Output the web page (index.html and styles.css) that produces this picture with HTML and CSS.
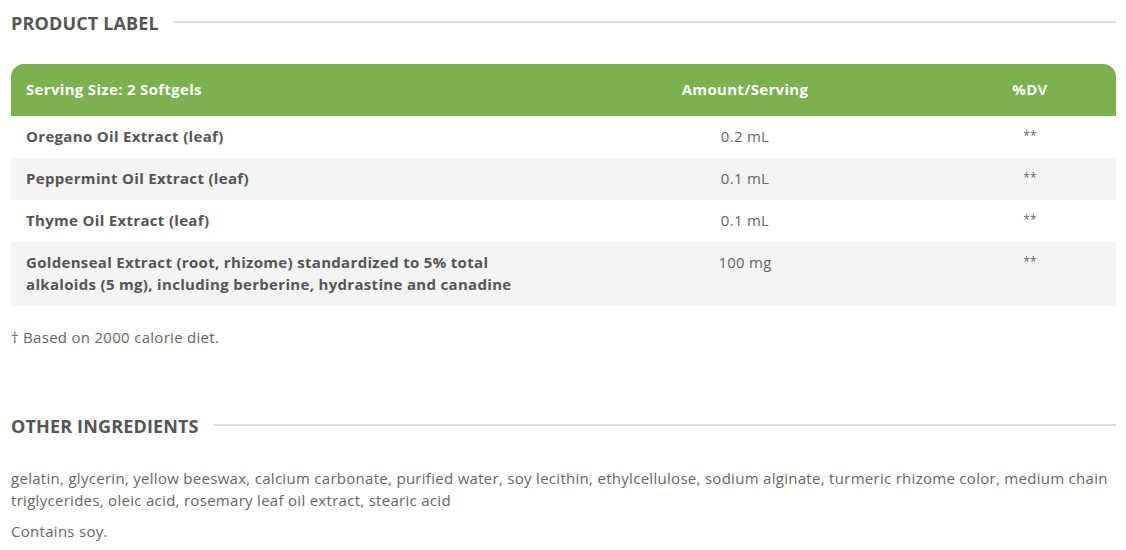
FILE: index.html
```html
<!DOCTYPE html>
<html>
<head>
<meta charset="utf-8">
<link rel="stylesheet" href="styles.css">
</head>
<body>
<div class="page">
  <section class="section">
    <div class="section-title"><h2>PRODUCT LABEL</h2><span class="rule"></span></div>
    <div class="label-table">
      <div class="row head">
        <div class="c-name">Serving Size: 2 Softgels</div>
        <div class="c-amt">Amount/Serving</div>
        <div class="c-dv">%DV</div>
      </div>
      <div class="row">
        <div class="c-name">Oregano Oil Extract (leaf)</div>
        <div class="c-amt">0.2 mL</div>
        <div class="c-dv">**</div>
      </div>
      <div class="row alt">
        <div class="c-name">Peppermint Oil Extract (leaf)</div>
        <div class="c-amt">0.1 mL</div>
        <div class="c-dv">**</div>
      </div>
      <div class="row">
        <div class="c-name">Thyme Oil Extract (leaf)</div>
        <div class="c-amt">0.1 mL</div>
        <div class="c-dv">**</div>
      </div>
      <div class="row alt">
        <div class="c-name">Goldenseal Extract (root, rhizome) standardized to 5% total alkaloids (5 mg), including berberine, hydrastine and canadine</div>
        <div class="c-amt">100 mg</div>
        <div class="c-dv">**</div>
      </div>
    </div>
    <p class="note">† Based on 2000 calorie diet.</p>
  </section>
  <section class="section second">
    <div class="section-title"><h2>OTHER INGREDIENTS</h2><span class="rule"></span></div>
    <p class="ingredients">gelatin, glycerin, yellow beeswax, calcium carbonate, purified water, soy lecithin, ethylcellulose, sodium alginate, turmeric rhizome color, medium chain triglycerides, oleic acid, rosemary leaf oil extract, stearic acid</p>
    <p class="note">Contains soy.</p>
  </section>
</div>
</body>
</html>
```

FILE: styles.css
```css
* { box-sizing: border-box; }
html, body { margin: 0; padding: 0; background: #fff; }
body {
  font-family: "Open Sans", "Noto Sans", sans-serif;
  color: #666;
  font-size: 15px;
  line-height: 22px;
  letter-spacing: 0.29px;
}
.page {
  padding: 10px 10px 0 11px;
}
.section-title {
  display: flex;
  align-items: center;
  gap: 15px;
  height: 26px;
}
.section-title h2 {
  margin: 0;
  font-family: "Open Sans", sans-serif;
  font-weight: 700;
  font-size: 18px;
  color: #555;
  letter-spacing: 0.15px;
  white-space: nowrap;
}
.rule {
  flex: 1;
  height: 2px;
  background: #ddd;
  margin-top: -2px;
}
.label-table {
  margin-top: 28px;
}
.row {
  display: grid;
  grid-template-columns: 529px 410px 1fr;
  padding: 9px 0 11px;
  font-weight: 700;
  color: #555;
  letter-spacing: 0.32px;
}
.row.alt { background: #f4f4f4; }
.row.head {
  background: #7db04e;
  color: #fff;
  border-radius: 13px 13px 0 0;
  padding: 14px 0 16px;
}
.c-name { padding: 0 15px; }
.c-amt, .c-dv { text-align: center; }
.c-dv { padding-right: 6px; }
.row:not(.head) .c-amt,
.row:not(.head) .c-dv { font-weight: 400; color: #666; letter-spacing: 0.26px; }
.row:not(.head) .c-dv { font-size: 12px; }
.note {
  margin: 20px 0 0;
}
.second { margin-top: 65px; }
.ingredients { margin: 28px 0 0; }
.second .note { margin-top: 9px; }
```
